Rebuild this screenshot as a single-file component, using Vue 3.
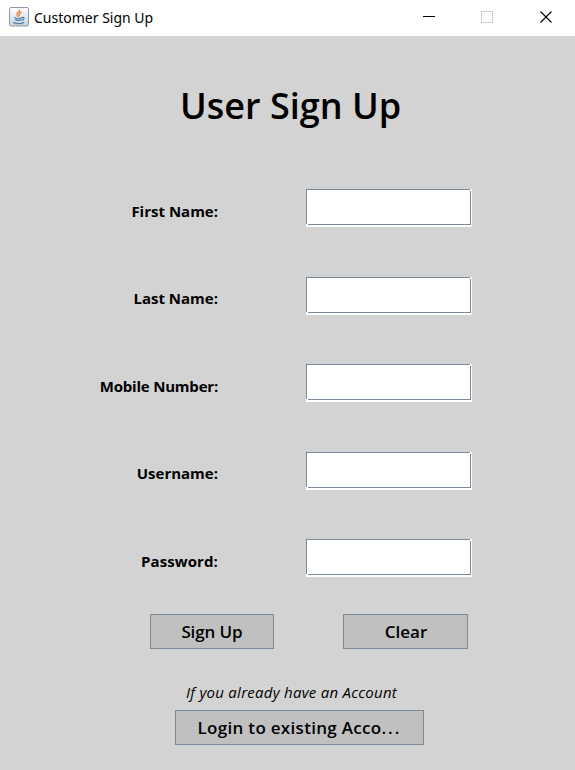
<script setup>
const fields = [
  { id: 'first', label: 'First Name:' },
  { id: 'last', label: 'Last Name:' },
  { id: 'mobile', label: 'Mobile Number:' },
  { id: 'user', label: 'Username:' },
  { id: 'pass', label: 'Password:' },
]
</script>

<template>
  <div class="window">
    <header class="titlebar">
      <svg class="java" width="20" height="20" viewBox="0 0 20 20">
        <defs>
          <linearGradient id="tile" x1="0" y1="0" x2="0" y2="1">
            <stop offset="0" stop-color="#ffffff" />
            <stop offset="1" stop-color="#c8d2dc" />
          </linearGradient>
        </defs>
        <rect x=".5" y=".5" width="19" height="18.5" rx="1.5" fill="url(#tile)" stroke="#8c9aa8" />
        <path d="M10.5 2.5C11.3 5 7 5.8 8.2 8.3L9.3 9.8M12.6 5C9.3 6.3 10 7.5 10.6 9.2" fill="none" stroke="#e8823f" stroke-width="1.4" />
        <path d="M5.2 10.6C7 11.5 11 11.5 13 10.6M6.2 12.6C8 13.5 11 13.5 12.4 12.6M4.2 15.2C5.5 17 13 17 15 15.2M13 10.4C16 10 15.3 12.8 12.6 13.3" fill="none" stroke="#5580a5" stroke-width="1.2" />
      </svg>
      <span class="caption">Customer Sign Up</span>
      <svg class="controls" width="132" height="14" viewBox="0 0 132 14">
        <path d="M0 5.5H12" stroke="#000" />
        <rect x="58.5" y=".5" width="11" height="11" fill="none" stroke="#ccc" />
        <path d="M117.5 .5L128.5 11.5M128.5 .5L117.5 11.5" stroke="#000" stroke-width="1.1" />
      </svg>
    </header>
    <main class="panel">
      <h1>User Sign Up</h1>
      <form @submit.prevent>
        <div v-for="f in fields" :key="f.id" class="row">
          <label :for="f.id" :class="f.id">{{ f.label }}</label>
          <div class="well"><input :id="f.id" :type="f.id === 'pass' ? 'password' : 'text'"></div>
        </div>
        <div class="actions">
          <button class="signup">Sign Up</button>
          <button class="clear" type="reset">Clear</button>
        </div>
      </form>
      <p class="hint">If you already have an Account</p>
      <button class="login">Login to existing Acco<span class="dots">...</span></button>
    </main>
  </div>
</template>

<style>
body { background: #d3d3d3; }
</style>

<style scoped>
* { box-sizing: border-box; }
.window { width: 575px; height: 770px; overflow: hidden; background: #d3d3d3; color: #000; font-family: "Open Sans", sans-serif; }
.titlebar { display: flex; height: 36px; background: #fff; padding-left: 9px; }
.java { margin-top: 7px; flex: none; }
.caption { margin-left: 5px; font: 14px/20px "Noto Sans", sans-serif; margin-top: 8px; white-space: nowrap; }
.controls { margin: 11px 20px 0 auto; }
.panel { display: flex; flex-direction: column; }
h1 { margin: 43px 0 0 180px; font-size: 36px; line-height: 54px; font-weight: 650; letter-spacing: 0; white-space: nowrap; }
form { margin-top: 56px; }
.row { display: grid; grid-template-columns: 218px 166px; column-gap: 88px; height: 87.5px; }
label { justify-self: end; font-size: 15px; font-weight: 700; line-height: 20px; margin-top: 12px; white-space: nowrap; }
.row:nth-child(even) label { margin-top: 11px; }
.mobile { letter-spacing: -.2px; }
.pass { letter-spacing: .1px; }
.well { position: relative; width: 166px; height: 38px; background: #fff; }
/* etched border: the two far corners are left open */
.well::before, .well::after { content: ""; position: absolute; background: #fff; }
.well::before { right: 1px; top: 0; width: 1px; height: 2px; }
.well::after { left: 0; top: 35px; width: 2px; height: 1px; }
input { display: block; width: 165px; height: 36px; margin: 0; padding: 0 4px; border: 1px solid #7a8a99; border-radius: 0; background: #fff; outline: 0; }
.actions { display: flex; gap: 69px; margin-left: 150px; margin-top: -12.5px; }
button { height: 35px; padding: 0; border: 1px solid #7a8a99; border-radius: 0; background: #c0c0c0; color: #000; font: 650 17px/33px "Open Sans", sans-serif; white-space: nowrap; }
.signup { width: 124px; letter-spacing: -.1px; }
.clear { width: 125px; padding-left: 1px; }
.hint { margin: 33px 0 0 186px; font-size: 15px; line-height: 20px; font-style: italic; letter-spacing: .26px; white-space: nowrap; }
.login { width: 249px; margin: 8px 0 0 175px; letter-spacing: .3px; }
.dots { letter-spacing: 2px; }
</style>
